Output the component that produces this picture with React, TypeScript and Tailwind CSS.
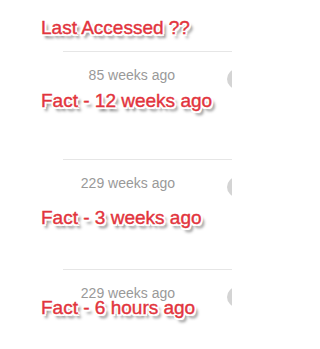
import React from "react";

const rows = [
  { ago: "85 weeks ago", h: "h-[108px]" },
  { ago: "229 weeks ago", h: "h-[110px]" },
  { ago: "229 weeks ago", h: "h-[80px]" },
];

const notes = [
  { text: "Last Accessed ??", top: "top-[18px]" },
  { text: "Fact - 12 weeks ago", top: "top-[91px]" },
  { text: "Fact - 3 weeks ago", top: "top-[208px]" },
  { text: "Fact - 6 hours ago", top: "top-[298px]" },
];

function Callout({ text, top }: { text: string; top: string }) {
  return (
    <div
      className={`absolute left-[41px] ${top} whitespace-nowrap text-[19px] leading-[20px] text-[#e2343d] [-webkit-text-stroke:0.4px_#e2343d] [text-shadow:-1.5px_-1.5px_0_#fff,1.5px_-1.5px_0_#fff,-1.5px_1.5px_0_#fff,1.5px_1.5px_0_#fff,0_-2px_0_#fff,0_2px_0_#fff,-2px_0_0_#fff,2px_0_0_#fff,3px_4px_3px_rgba(0,0,0,0.6)]`}
    >
      {text}
    </div>
  );
}

export default function App() {
  return (
    <div className="relative w-[251px] h-[349px] bg-white overflow-hidden font-['Liberation_Sans',Arial,sans-serif]">
      <div className="w-[232px] pt-[51px] overflow-hidden">
        {rows.map((row, i) => (
          <div key={i} className={`${row.h} ml-[63px] border-t border-[#e6e6e6] relative`}>
            <div className="w-[112px] pt-[15px] text-right text-[14px] leading-[16px] text-[#999]">
              {row.ago}
            </div>
            <div className="absolute left-[164px] top-[17px] w-[20px] h-[20px] rounded-full bg-[#d4d4d4]" />
          </div>
        ))}
      </div>
      {notes.map((n, i) => (
        <Callout key={i} text={n.text} top={n.top} />
      ))}
    </div>
  );
}
